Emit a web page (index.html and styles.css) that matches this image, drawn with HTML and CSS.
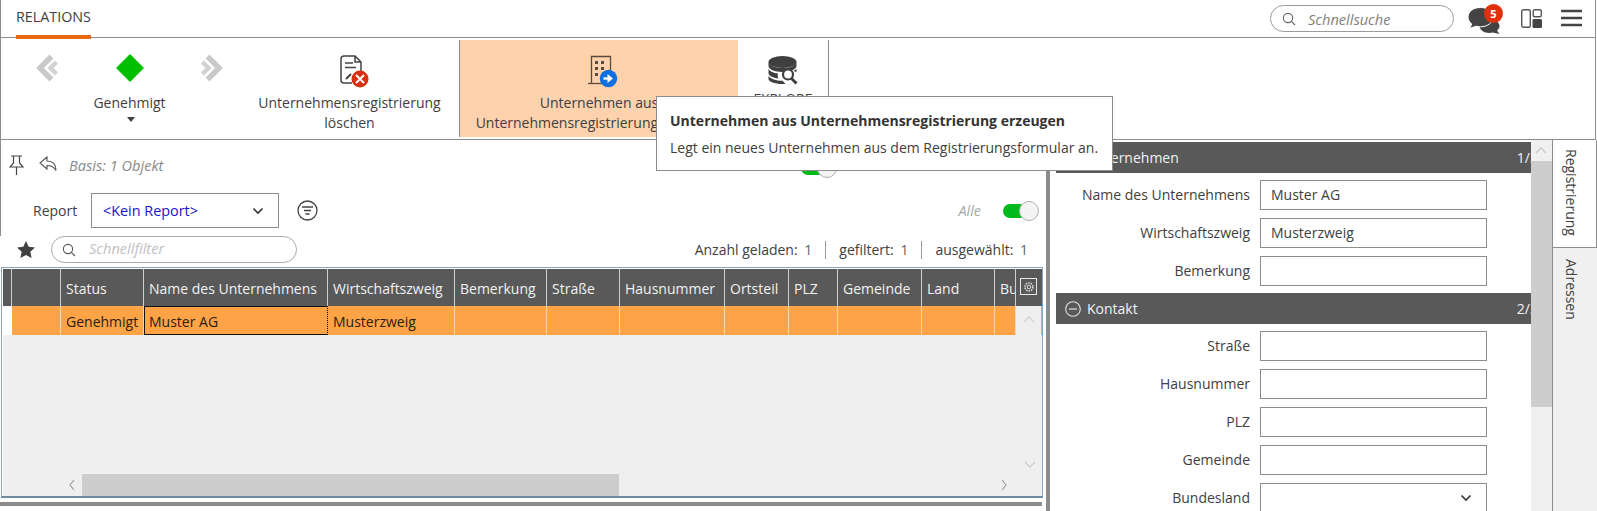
FILE: index.html
```html
<!DOCTYPE html>
<html lang="de">
<head>
<meta charset="utf-8">
<title>Relations</title>
<link rel="stylesheet" href="styles.css">
</head>
<body>
<div class="app">
  <header class="topbar">
    <div class="tab">RELATIONS</div>
    <div class="top-tools">
      <div class="search">
        <svg class="search-icon" width="14" height="14" viewBox="0 0 14 14"><circle cx="6" cy="6" r="4.600" fill="none" stroke="#666" stroke-width="1.100"/><path d="M9.400 9.400l3.600 3.600" stroke="#666" stroke-width="1.100"/></svg>
        <span class="search-text">Schnellsuche</span>
      </div>
      <div class="chat">
        <svg width="34" height="27" viewBox="0 0 33 27"><path d="M22 12c-6 0-10 3.500-10 7s4 7 10 7c1.200 0 2.300-.1 3.300-.4l6.700 1.400-2.500-3.500c1.600-1.200 2.500-2.800 2.500-4.500 0-3.500-4-7-10-7z" fill="#444"/><path d="M13 .5C6 .5.500 4.500.500 10c0 2.800 1.400 5.200 3.800 7L2 21.500l6.500-2.300c1.400.4 2.900.6 4.500.6 7 0 12.500-4.300 12.500-9.800S20 .5 13 .5z" fill="#444" stroke="#fff" stroke-width="1"/></svg>
        <span class="badge">5</span>
      </div>
      <svg class="layout-icon" width="21" height="19" viewBox="0 0 21 19"><rect x=".7" y=".7" width="8.600" height="17.600" rx="2" fill="none" stroke="#555" stroke-width="1.400"/><rect x="12.200" y=".7" width="8.100" height="7.100" rx="1.500" fill="none" stroke="#555" stroke-width="1.400"/><rect x="11.500" y="10" width="9.500" height="9" rx="1.500" fill="#444"/></svg>
      <svg class="menu-icon" width="21" height="18" viewBox="0 0 21 18"><path d="M0 2h21M0 9h21M0 16h21" stroke="#444" stroke-width="2.400"/></svg>
    </div>
  </header>

  <section class="ribbon">
    <div class="rb-state">
      <div class="rb-nav">
        <svg width="23" height="28" viewBox="0 0 23 28"><path d="M15.500 2.500L4 14l11.500 11.500" fill="none" stroke="#c9c9c9" stroke-width="5.500"/><path d="M20.500 8l-6 6 6 6" fill="none" stroke="#d2d2d2" stroke-width="4.500"/></svg>
        <svg width="28" height="28" viewBox="0 0 28 28"><path d="M14 0l14 14-14 14L0 14z" fill="#00bf00"/></svg>
        <svg width="22" height="28" viewBox="0 0 22 28"><path d="M6.500 2.500L18 14 6.500 25.500" fill="none" stroke="#c9c9c9" stroke-width="5.500"/><path d="M1.500 8l6 6-6 6" fill="none" stroke="#d2d2d2" stroke-width="4.500"/></svg>
      </div>
      <div class="rb-label">Genehmigt</div>
      <div class="caret"></div>
    </div>
    <div class="rb-btn rb-delete">
      <svg class="rb-icon icon-doc" width="30" height="33" viewBox="0 0 30 33">
        <path d="M4 1h11l6 6v12M21 7h-6V1" fill="none" stroke="#444" stroke-width="1.500"/>
        <path d="M4 1C2 1 1 2 1 4v21c0 2 1 3 3 3h8" fill="none" stroke="#444" stroke-width="1.500"/>
        <path d="M5 8h8M5 12.500h11" stroke="#444" stroke-width="1.500"/>
        <path d="M6 24l5-5" stroke="#444" stroke-width="2"/>
        <circle cx="20" cy="24" r="8.500" fill="#d9300f"/>
        <path d="M16 20l8 8M24 20l-8 8" stroke="#fff" stroke-width="1.900"/>
      </svg>
      <div class="rb-label">Unternehmensregistrierung löschen</div>
    </div>
    <div class="rb-btn rb-create">
      <svg class="rb-icon icon-building" width="30" height="33" viewBox="0 0 30 33">
        <path d="M3.500 28V1.500h19V16" fill="none" stroke="#5a4a3e" stroke-width="1.300"/>
        <path d="M0 28.500h14" stroke="#5a4a3e" stroke-width="1.300"/>
        <path d="M7 6h3v3H7zM13 6h3v3h-3zM7 12h3v3H7zM13 12h3v3h-3zM7 18h3v3H7z" fill="#5a4a3e"/>
        <circle cx="20.500" cy="23.500" r="8.700" fill="#0f6fe0"/>
        <path d="M15.500 23.500h5" stroke="#fff" stroke-width="2.400"/>
        <path d="M19.500 19l5.500 4.500-5.500 4.500z" fill="#fff"/>
      </svg>
      <div class="rb-label">Unternehmen aus Unternehmensregistrierung erzeugen</div>
    </div>
    <div class="rb-btn rb-explore">
      <svg class="rb-icon" width="31" height="29" viewBox="0 0 31 29">
        <ellipse cx="14.500" cy="6" rx="14" ry="6" fill="#3f3f3f"/>
        <path d="M.5 6v4c0 3 6 6 14 6s14-3 14-6V6c0 3-6 6-14 6S.5 9 .5 6z" fill="#3f3f3f"/>
        <path d="M.5 13v4c0 2.500 4 4.800 10 5.500-1-1.500-1-3.500-.5-5C5.500 17 2 15.500.5 13z" fill="#3f3f3f"/>
        <path d="M.5 20v3c0 2.500 6 5 14 5 1 0 2 0 3-.1l-3-3.100C8 24.800 2.500 23 .5 20z" fill="#3f3f3f"/>
        <circle cx="20" cy="18.500" r="5" fill="#fff" stroke="#3f3f3f" stroke-width="2.200"/>
        <path d="M23.500 22.500l5 5" stroke="#3f3f3f" stroke-width="3"/>
        <path d="M28.500 13v3l-3-1z" fill="#3f3f3f"/>
      </svg>
      <div class="rb-label">EXPLORE</div>
    </div>
  </section>

  <main class="main">
    <div class="left">
      <div class="pane-head">
        <div class="tool-row">
          <svg width="15" height="20" viewBox="0 0 15 20"><path d="M2 1h11M4.500 1v7L1 12h13l-3.500-4V1M7.500 12v8" fill="none" stroke="#444" stroke-width="1.200"/></svg>
          <svg class="back-icon" width="18" height="16" viewBox="0 0 18 16"><path d="M8 1L1 7l7 6V9.500c4 0 7 1 9 5 0-6-3-9.500-9-9.500z" fill="none" stroke="#555" stroke-width="1.100"/></svg>
          <span class="basis">Basis: 1 Objekt</span>
          <span class="toggle toggle-hidden"><span class="knob"></span></span>
        </div>
        <div class="report-row">
          <span class="report-label">Report</span>
          <div class="select">
            <span class="select-text">&lt;Kein Report&gt;</span>
            <svg width="12" height="8" viewBox="0 0 12 8"><path d="M1.500 1.500L6 6l4.500-4.500" fill="none" stroke="#333" stroke-width="1.600"/></svg>
          </div>
          <svg class="filter-icon" width="21" height="21" viewBox="0 0 21 21"><circle cx="10.500" cy="10.500" r="9.500" fill="none" stroke="#444" stroke-width="1.300"/><path d="M5 7h11M7 10.500h7M8.500 14h4" stroke="#444" stroke-width="1.300"/></svg>
          <span class="alle">Alle</span>
          <span class="toggle"><span class="knob"></span></span>
        </div>
      </div>
      <div class="filter-row">
        <svg class="star" width="18" height="17" viewBox="0 0 18 17"><path d="M9 0l2.700 5.800 6.300.7-4.700 4.200 1.300 6.300L9 13.900 3.400 17l1.300-6.300L0 6.500l6.300-.7z" fill="#404040"/></svg>
        <div class="qfilter">
          <svg width="14" height="14" viewBox="0 0 14 14"><circle cx="6" cy="6" r="4.600" fill="none" stroke="#555" stroke-width="1.100"/><path d="M9.400 9.400l3.600 3.600" stroke="#555" stroke-width="1.100"/></svg>
          <span class="qfilter-text">Schnellfilter</span>
        </div>
        <div class="counts">
          <span>Anzahl geladen: <b>1</b></span><i></i><span>gefiltert: <b>1</b></span><i></i><span>ausgewählt: <b>1</b></span>
        </div>
      </div>
      <div class="grid">
        <div class="grid-head cols">
          <div></div><div></div>
          <div>Status</div><div>Name des Unternehmens</div><div>Wirtschaftszweig</div><div>Bemerkung</div><div>Straße</div><div>Hausnummer</div><div>Ortsteil</div><div>PLZ</div><div>Gemeinde</div><div>Land</div><div>Bundesland</div>
          <div class="gear-cell"><span class="gear-box"><svg width="12" height="12" viewBox="0 0 12 12"><circle cx="6" cy="6" r="1.800" fill="none" stroke="#ddd"/><circle cx="6" cy="6" r="4" fill="none" stroke="#ddd" stroke-width="1.600" stroke-dasharray="1.500 1"/></svg></span></div>
        </div>
        <div class="grid-body">
          <div class="grid-row cols">
            <div class="blank"></div><div></div>
            <div>Genehmigt</div><div class="current">Muster AG</div><div>Musterzweig</div><div></div><div></div><div></div><div></div><div></div><div></div><div></div><div></div>
            <div class="up-cell"><svg width="12" height="7" viewBox="0 0 12 7"><path d="M1 6l5-5 5 5" fill="none" stroke="#d4d4d4" stroke-width="1.300"/></svg></div>
          </div>
          <div class="grid-fill"><svg width="12" height="7" viewBox="0 0 12 7"><path d="M1 1l5 5 5-5" fill="none" stroke="#d0d0d0" stroke-width="1.300"/></svg></div>
          <div class="hscroll">
            <svg width="6" height="12" viewBox="0 0 6 12"><path d="M5 1L1 6l4 5" fill="none" stroke="#999" stroke-width="1.100"/></svg>
            <div class="hthumb"></div>
            <svg class="hright" width="6" height="12" viewBox="0 0 6 12"><path d="M1 1l4 5-4 5" fill="none" stroke="#999" stroke-width="1.100"/></svg>
          </div>
        </div>
      </div>
      <div class="hbar"></div>
    </div>
    <div class="splitter"></div>
    <div class="form">
      <div class="sec">
        <svg width="16" height="16" viewBox="0 0 16 16"><circle cx="8" cy="8" r="7.300" fill="none" stroke="#e0e0e0" stroke-width="1.100"/><path d="M4 8h8" stroke="#e0e0e0" stroke-width="1.200"/></svg>
        <span class="sec-title">Unternehmen</span><span class="sec-count">1/3</span>
      </div>
      <div class="fields">
        <label>Name des Unternehmens</label><div class="input">Muster AG</div>
        <label>Wirtschaftszweig</label><div class="input">Musterzweig</div>
        <label>Bemerkung</label><div class="input"></div>
      </div>
      <div class="sec">
        <svg width="16" height="16" viewBox="0 0 16 16"><circle cx="8" cy="8" r="7.300" fill="none" stroke="#e0e0e0" stroke-width="1.100"/><path d="M4 8h8" stroke="#e0e0e0" stroke-width="1.200"/></svg>
        <span class="sec-title">Kontakt</span><span class="sec-count">2/3</span>
      </div>
      <div class="fields">
        <label>Straße</label><div class="input"></div>
        <label>Hausnummer</label><div class="input"></div>
        <label>PLZ</label><div class="input"></div>
        <label>Gemeinde</label><div class="input"></div>
        <label>Bundesland</label><div class="input input-select"><svg width="12" height="8" viewBox="0 0 12 8"><path d="M1.500 1.500L6 6l4.500-4.500" fill="none" stroke="#333" stroke-width="1.600"/></svg></div>
      </div>
    </div>
    <div class="vscroll">
      <div class="vup"><svg width="12" height="7" viewBox="0 0 12 7"><path d="M1 6l5-5 5 5" fill="none" stroke="#c8c8c8" stroke-width="1.400"/></svg></div>
      <div class="vthumb"></div>
    </div>
    <div class="side-tabs">
      <div class="side-tab active">Registrierung</div>
      <div class="side-tab">Adressen</div>
    </div>
  </main>

  <div class="tooltip">
    <div class="tip-title">Unternehmen aus Unternehmensregistrierung erzeugen</div>
    <div class="tip-text">Legt ein neues Unternehmen aus dem Registrierungsformular an.</div>
  </div>
</div>
</body>
</html>
```
FILE: styles.css
```css
* { box-sizing: border-box; }
html, body { margin: 0; padding: 0; background: #fff; }
body { font-family: "Open Sans", "Noto Sans", sans-serif; font-size: 14px; color: #404040; }
.app { position: relative; width: 1597px; height: 511px; overflow: hidden; display: flex; flex-direction: column; }

.topbar { height: 38px; flex: none; display: flex; border-left: 1px solid #8c8c8c; border-right: 1px solid #8c8c8c; margin-right: 1px; border-bottom: 1px solid #8c8c8c; }
.tab { margin-left: 15px; height: 39px; padding-top: 7px; border-bottom: 4px solid #e8690f; line-height: 20px; color: #404040; font-size: 14.3px; }
.top-tools { margin-left: auto; display: flex; align-items: flex-start; }
.search { width: 184px; height: 27px; margin-top: 5px; border: 1px solid #9a9a9a; border-radius: 14px; display: flex; align-items: center; padding-left: 11px; }
.search-text { margin-left: 12px; font-style: italic; color: #808080; font-size: 14.6px; }
.chat { position: relative; margin-left: 13px; margin-top: 7px; width: 34px; height: 27px; }
.badge { position: absolute; left: 17px; top: -3px; width: 19px; height: 19px; border-radius: 50%; background: #e0300c; color: #fff; font-size: 11px; font-weight: 700; line-height: 19px; text-align: center; }
.layout-icon { margin: 9px 0 0 20px; }
.menu-icon { margin: 9px 13px 0 19px; }

.ribbon { height: 102px; flex: none; display: flex; padding-top: 2px; border-left: 1px solid #8c8c8c; border-right: 1px solid #8c8c8c; margin-right: 1px; border-bottom: 1px solid #8c8c8c; }
.rb-state { width: 239px; padding: 14px 17px 0 35px; text-align: center; }
.rb-nav { display: flex; justify-content: space-between; height: 34px; margin-bottom: 5px; }
.rb-label { font-size: 14px; line-height: 20px; color: #404040; text-align: center; }
.caret { width: 0; height: 0; margin: 4px auto 0; border-left: 4px solid transparent; border-right: 4px solid transparent; border-top: 5px solid #404040; transform: translateX(1px); }
.rb-btn { padding-top: 15px; display: flex; flex-direction: column; align-items: center; }
.rb-icon { display: block; height: 33px; margin-bottom: 5px; flex: none; }
.icon-doc { margin-left: 11px; }
.icon-building { margin-left: 7px; }
.rb-delete { width: 219px; padding-left: 12px; padding-right: 12px; }
.rb-create { width: 279px; height: 97px; background: #fdd2ad; border-left: 1px solid #8c8c8c; padding-left: 15px; padding-right: 15px; }
.rb-explore { width: 91px; height: 95px; padding-top: 16px; border-right: 1px solid #8c8c8c; }
.rb-explore .rb-icon { margin-bottom: 4px; height: 29px; }

.main { flex: 1; min-height: 0; display: flex; }
.left { width: 1046px; flex: none; display: flex; flex-direction: column; }
.pane-head { height: 96px; border-left: 1px solid #8c8c8c; flex: none; }
.tool-row { height: 53px; padding: 15px 0 0 8px; display: flex; align-items: flex-start; }
.back-icon { margin: 1px 0 0 15px; }
.basis { margin-left: 12px; font-style: italic; color: #8a8a8a; line-height: 20px; font-size: 14.6px; }
.toggle { position: relative; display: block; width: 36px; height: 20px; flex: none; }
.toggle::before { content: ""; position: absolute; left: 0; top: 3px; width: 24px; height: 14px; border-radius: 7px; background: #00b91a; }
.knob { position: absolute; right: 0; top: 0; width: 20px; height: 20px; border-radius: 50%; background: #f4f4f4; border: 1px solid #b0b0b0; }
.toggle-hidden { margin-left: auto; margin-right: 209px; margin-top: 3px; }
.report-row { height: 35px; display: flex; align-items: center; padding-left: 32px; }
.report-label { width: 58px; flex: none; color: #404040; }
.select { width: 188px; height: 35px; border: 1px solid #8c8c8c; display: flex; align-items: center; justify-content: space-between; padding: 0 14px 0 11px; }
.select-text { color: #1414c8; font-size: 14.4px; }
.filter-icon { margin-left: 18px; }
.alle { margin-left: auto; font-style: italic; color: #a8a8a8; font-size: 14.4px; }
.report-row .toggle { margin: 0 7px 0 22px; }
.filter-row { height: 31px; flex: none; padding: 0 18px 0 17px; display: flex; align-items: flex-start; }
.star { margin-top: 5px; }
.qfilter { width: 246px; height: 27px; margin-left: 16px; border: 1px solid #a8a8a8; border-radius: 14px; display: flex; align-items: center; padding-left: 10px; }
.qfilter-text { margin-left: 13px; padding-bottom: 3px; font-style: italic; color: #c0c0c0; font-size: 14.6px; }
.counts { margin-left: auto; display: flex; align-items: center; height: 27px; }
.counts b { font-weight: 400; color: #666; margin-left: 3px; }
.counts i { width: 1px; height: 18px; background: #999; margin: 0 13px; }

.grid { margin-left: 1px; width: 1042px; height: 231px; flex: none; border: 1px solid #8aa4bc; border-bottom: 2px solid #6f8aa3; padding: 1px 0 0 1px; display: flex; flex-direction: column; }
.cols { display: grid; grid-template-columns: 9px 49px 83px 184px 127px 92px 73px 105px 64px 49px 84px 73px 21px 25px; }
.cols > div { border-right: 1px solid #d0d0d0; padding-left: 5px; white-space: nowrap; overflow: hidden; }
.grid-head { height: 37px; background: #595959; color: #f2f2f2; line-height: 39px; flex: none; }
.gear-cell { padding: 9px 0 0 !important; border-right: 0 !important; line-height: 0; }
.gear-box { display: flex; width: 17px; height: 17px; margin-left: 4px; border: 1px solid #e8e8e8; align-items: center; justify-content: center; }
.grid-body { flex: 1; min-height: 0; background: #efefef; display: flex; flex-direction: column; }
.grid-row { height: 29px; line-height: 31px; background: #ffa347; color: #2a2013; flex: none; }
.grid-row > div { border-right-color: #ffd6a8; }
.grid-row .blank { background: #fff; border-right: 0; }
.grid-row .current { border: 1px solid #111; border-right: 1px dotted #000; line-height: 29px; padding-left: 4px; }
.grid-row .up-cell { background: #efefef; border-right: 0; padding: 10px 0 0 7px; line-height: 0; }
.grid-fill { flex: 1; display: flex; justify-content: flex-end; align-items: flex-end; padding: 0 6px 6px 0; }
.hscroll { height: 22px; flex: none; display: flex; align-items: center; padding-left: 66px; }
.hthumb { width: 537px; height: 22px; background: #cdcdcd; margin-left: 7px; }
.hright { margin-left: 382px; }
.hbar { height: 4px; width: 1042px; margin-top: 4px; background: #8c8c8c; flex: none; }

.splitter { width: 4px; flex: none; background: #8c8c8c; }
.form { width: 481px; flex: none; padding: 2px 0 0 6px; overflow: hidden; }
.sec { height: 31px; background: #595959; color: #f2f2f2; display: flex; align-items: center; padding-left: 9px; overflow: hidden; }
.sec-title { margin-left: 6px; }
.sec-count { margin-left: auto; margin-right: -7px; }
.fields { display: grid; grid-template-columns: 194px 227px; column-gap: 10px; row-gap: 8px; padding: 7px 0; }
.fields label { text-align: right; line-height: 30px; color: #404040; white-space: nowrap; }
.input { height: 30px; border: 1px solid #8c8c8c; padding-left: 10px; line-height: 28px; color: #404040; }
.input-select { display: flex; align-items: center; justify-content: flex-end; padding-right: 14px; }
.vscroll { width: 21px; flex: none; background: #f0f0f0; }
.vup { height: 21px; padding: 7px 0 0 4px; line-height: 0; }
.vthumb { height: 246px; background: #cdcdcd; }
.side-tabs { flex: 1; background: #f0f0f0; border-left: 1px solid #8c8c8c; }
.side-tab { writing-mode: vertical-rl; text-align: left; padding: 11px 16px 0 0; width: 100%; height: 108px; font-size: 14px; display: block; }
.side-tab.active { background: #fff; border-right: 1px solid #8c8c8c; border-bottom: 1px solid #8c8c8c; width: 44px; padding: 9px 15px 0 0; }

.tooltip { position: absolute; left: 656px; top: 96px; width: 457px; height: 75px; background: #fff; border: 1px solid #8c8c8c; padding: 14px 0 0 13px; }
.tip-title { font-weight: 700; font-size: 14px; line-height: 20px; color: #333; white-space: nowrap; }
.tip-text { margin-top: 7px; font-size: 14px; line-height: 20px; color: #404040; white-space: nowrap; }
```
